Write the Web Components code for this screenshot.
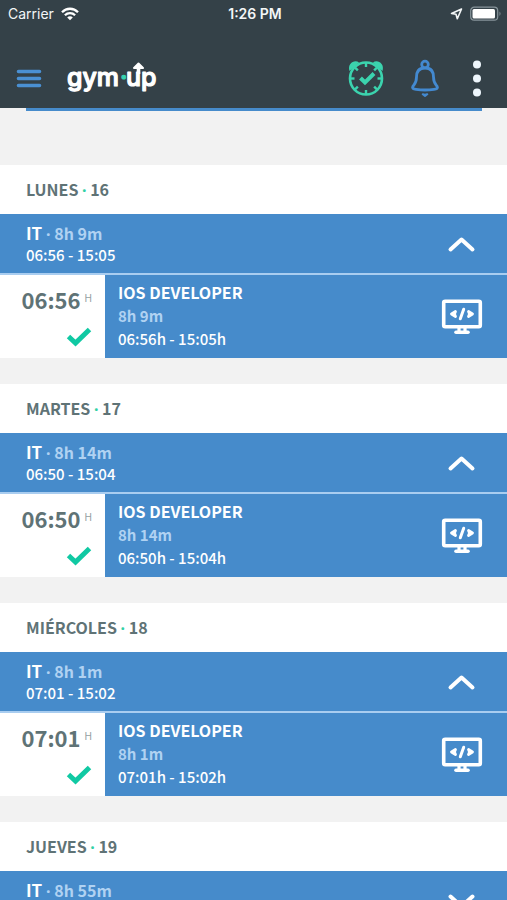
<!DOCTYPE html>
<html lang="es">
<head>
<meta charset="utf-8">
<meta name="viewport" content="width=device-width, initial-scale=1">
<title>gym·up</title>
<style>
  :root {
    --dark: #344148;
    --blue: #468bcb;
    --pale: #b0d2f2;
    --slate: #5f7376;
    --green: #10c9a3;
    --page: #f2f2f2;
  }
  body { margin: 0; background: var(--page); font-family: "Noto Sans CJK SC", "Noto Sans", sans-serif; }
</style>
</head>
<body>
<gym-app>
  <status-bar slot="top" carrier="Carrier" time="1:26 PM"></status-bar>
  <app-header slot="top"></app-header>
  <day-section day="LUNES" date="16" total="8h 9m" hours="06:56 - 15:05" open>
    <shift-row start="06:56" role-name="IOS DEVELOPER" total="8h 9m" hours="06:56h - 15:05h"></shift-row>
  </day-section>
  <day-section day="MARTES" date="17" total="8h 14m" hours="06:50 - 15:04" open>
    <shift-row start="06:50" role-name="IOS DEVELOPER" total="8h 14m" hours="06:50h - 15:04h"></shift-row>
  </day-section>
  <day-section day="MIÉRCOLES" date="18" total="8h 1m" hours="07:01 - 15:02" open>
    <shift-row start="07:01" role-name="IOS DEVELOPER" total="8h 1m" hours="07:01h - 15:02h"></shift-row>
  </day-section>
  <day-section day="JUEVES" date="19" total="8h 55m" hours=""></day-section>
</gym-app>

<script>
class Base extends HTMLElement {
  constructor() { super(); this.attachShadow({ mode: 'open' }); }
  connectedCallback() { this.shadowRoot.innerHTML = this.render(); }
  get(name) { return this.getAttribute(name) || ''; }
}

customElements.define('gym-app', class extends Base {
  render() { return `
    <style>
      :host { display: flex; flex-direction: column; height: 100vh; overflow: hidden; }
      header { flex: none; background: var(--dark); }
      main { flex: 1; min-height: 0; overflow-y: auto; scrollbar-width: none; }
      .rule { height: 3px; margin: 0 25px 54px 26px; background: var(--blue); }
    </style>
    <header><slot name="top"></slot></header>
    <main><div class="rule"></div><slot></slot></main>`; }
});

customElements.define('status-bar', class extends Base {
  render() { return `
    <style>
      :host { display: grid; grid-template-columns: 1fr auto 1fr; align-items: center; height: 28px; padding: 0 5px 0 8px;
        color: #f3f6f7; font: 14px/20px Inter, sans-serif; }
      .side { display: flex; align-items: center; gap: 7px; }
      .end { justify-content: flex-end; }
      .time { font-weight: 600; }
      svg { display: block; }
    </style>
    <div class="side"><span>${this.get('carrier')}</span>
      <svg width="18" height="14" viewBox="0 0 18 14" fill="none" stroke="#fff" stroke-width="2.300">
        <path d="M1 5.200C5.500.6 12.500.6 17 5.200M3.900 8.300C6.700 5.500 11.300 5.500 14.100 8.300"/>
        <path d="M6.200 10.400C7.800 8.900 10.200 8.900 11.800 10.400L9 13.200Z" fill="#fff" stroke="none"/>
      </svg></div>
    <span class="time">${this.get('time')}</span>
    <div class="side end">
      <svg width="13" height="12" viewBox="0 0 13 12" fill="none" stroke="#f3f6f7" stroke-width="1.600" stroke-linejoin="round"><path d="M11.500 1L1.500 5.500L6 6.300L7.300 10.800Z"/></svg>
      <svg width="32" height="16" viewBox="0 0 32 16"><rect x=".7" y="1.200" width="27" height="13" rx="3.500" fill="none" stroke="#87949a" stroke-width="1.200"/><rect x="2.500" y="3" width="22.500" height="9.500" rx="1.500" fill="#fff"/><path d="M29.500 5.500Q31.500 7.700 29.500 10Z" fill="#87949a"/></svg>
    </div>`; }
});

customElements.define('app-header', class extends Base {
  render() {
    const ticks = [0, 45, 90, 135, 180, 225, 270, 315].map(a => `<path d="M19 5V9" transform="rotate(${a} 19 20.500)"/>`).join('');
    return `
    <style>
      :host { display: flex; align-items: center; height: 80px; box-sizing: border-box; padding: 20px 18px 0 15px; }
      button { display: block; padding: 0; border: 0; background: none; line-height: 0; }
      a { display: block; line-height: 0; margin-left: 24px; }
      .actions { display: flex; align-items: center; gap: 23px; margin-left: auto; }
      svg { display: block; }
    </style>
    <button aria-label="Menú"><svg width="28" height="20" viewBox="0 0 28 20" stroke="#4a90d3" stroke-width="3.600" stroke-linecap="round"><path d="M3.500 3.500H24.500M3.500 10.500H24.500M3.500 17.500H24.500"/></svg></button>
    <a href="#" aria-label="gym·up"><svg width="100" height="48" viewBox="0 0 100 48">
      <g font-family="Inter, sans-serif" font-size="25" font-weight="500" fill="#fff" stroke="#fff" stroke-width="1.200" stroke-linejoin="round">
        <text y="32"><tspan x="0">gym</tspan><tspan x="53" fill="#34d3b0" stroke="#34d3b0">·</tspan><tspan x="59">up</tspan></text>
      </g>
      <path d="M71.500 20V13" fill="none" stroke="#fff" stroke-width="3.600"/>
      <path d="M67 14L71.500 9.500L76 14Z" fill="#fff" stroke="#fff" stroke-width="2" stroke-linejoin="round"/>
    </svg></a>
    <div class="actions">
      <button aria-label="Fichar"><svg width="38" height="40" viewBox="0 0 38 40" fill="none" stroke="#3bd3ae" stroke-width="2.600">
        <path d="M2.500 13C0 5 8 1 12 4.500ZM35.500 13C38 5 30 1 26 4.500Z" fill="#3bd3ae" stroke="none"/>
        <circle cx="19" cy="20.500" r="16"/><g stroke-width="2.400">${ticks}</g>
        <path d="M13.500 20L18 24.500L27 15.500" stroke-width="4"/></svg></button>
      <button aria-label="Avisos"><svg width="34" height="40" viewBox="0 0 34 40" fill="none" stroke="#4389d0" stroke-width="2.800" stroke-linecap="round" stroke-linejoin="round">
        <circle cx="17" cy="6.500" r="3.300"/>
        <path d="M17 10C10 10 8.500 14 8.500 19C8.500 25 6.500 26 4.800 28.500C4 30 5 31 8 31.400Q17 32.600 26 31.400C29 31 30 30 29.200 28.500C27.500 26 25.500 25 25.500 19C25.500 14 24 10 17 10Z"/>
        <path d="M14.700 36.300Q17 37.200 19.300 36.300L17 38Z" stroke-width="2"/></svg></button>
      <button aria-label="Más opciones"><svg width="24" height="40" viewBox="0 0 24 40" fill="#eef6fc"><circle cx="12" cy="6.500" r="4"/><circle cx="12" cy="20.500" r="4"/><circle cx="12" cy="34.500" r="4"/></svg></button>
    </div>`; }
});

customElements.define('day-section', class extends Base {
  render() {
    const open = this.hasAttribute('open');
    return `
    <style>
      :host { display: block; margin-bottom: 26px; }
      h2 { margin: 0; padding: 0 26px; background: #fff; color: var(--slate); font-size: 16px; line-height: 49px; font-weight: 700; }
      i { font-family: "Noto Sans", sans-serif; font-style: normal; line-height: 1; }
      h2 i { color: #30d0a5; }
      button { display: flex; align-items: center; justify-content: space-between; width: 100%; height: 59px; padding: 0 30px 0 26px;
        border: 0; background: var(--blue); color: #fff; font: 500 15px/22px "Noto Sans CJK SC", sans-serif; text-align: left; }
      .name { display: block; font-size: 17px; font-weight: 700; }
      .name small { font-size: 16px; color: var(--pale); }
      .hours { display: block; min-height: 22px; }
      .rows { border-top: 2px solid #a9cdf0; }
      svg { display: block; }
    </style>
    <h2>${this.get('day')} <i>·</i> ${this.get('date')}</h2>
    <button aria-expanded="${open}">
      <span><span class="name">IT <small><i>·</i> ${this.get('total')}</small></span><span class="hours">${this.get('hours')}</span></span>
      <svg width="32" height="24" viewBox="0 0 32 24" fill="none" stroke="#fff" stroke-width="4" stroke-linecap="round" stroke-linejoin="round"><path d="${open ? 'M5.500 17.500L16.500 7.500L27.500 17.500' : 'M5.500 7.500L16.500 17.500L27.500 7.500'}"/></svg>
    </button>
    ${open ? '<div class="rows"><slot></slot></div>' : ''}`; }
});

customElements.define('shift-row', class extends Base {
  render() { return `
    <style>
      :host { display: grid; grid-template-columns: 105px 1fr; height: 83px; }
      .start { display: flex; flex-direction: column; align-items: flex-end; justify-content: space-between; box-sizing: border-box; padding: 8px 13px 11px 0; background: #fff; }
      .clock { display: flex; gap: 4px; color: var(--slate); font-size: 22px; line-height: 32px; font-weight: 700; }
      .clock sup { font: 10px/30px Inter, sans-serif; color: #94a0a2; }
      .job { display: flex; align-items: center; justify-content: space-between; padding: 0 24px 0 13px; background: var(--blue); color: #fff; font-size: 15px; line-height: 23px; }
      .job div { padding-bottom: 2px; }
      .job p { margin: 0; }
      .role { font-size: 16px; font-weight: 700; }
      .total { font-weight: 700; color: var(--pale); }
      .hours { font-weight: 500; }
      svg { display: block; }
    </style>
    <div class="start">
      <div class="clock"><span>${this.get('start')}</span><sup>H</sup></div>
      <svg width="26" height="20" viewBox="0 0 26 20" fill="none" stroke="#10c9a3" stroke-width="5"><path d="M2.500 9.500L9.500 16L23.500 2.500"/></svg>
    </div>
    <div class="job">
      <div><p class="role">${this.get('role-name')}</p><p class="total">${this.get('total')}</p><p class="hours">${this.get('hours')}</p></div>
      <svg width="42" height="36" viewBox="0 0 42 36" fill="none" stroke="#fff" stroke-width="3.600" stroke-linejoin="round" stroke-linecap="round">
        <rect x="2.700" y="2.200" width="36.600" height="25.600" rx="1.500"/>
        <path d="M18 29V33M24 29V33" stroke-width="3.200"/><path d="M15 33.200H27" stroke-width="3.600"/>
        <path d="M14.500 12.500L10.500 15L14.500 17.500L13.500 15ZM27.500 12.500L31.500 15L27.500 17.500L28.500 15Z" fill="#fff" stroke-width="2.800"/><path d="M22.700 10.200L19.300 19.800" stroke-width="3"/>
      </svg>
    </div>`; }
});
</script>
</body>
</html>
